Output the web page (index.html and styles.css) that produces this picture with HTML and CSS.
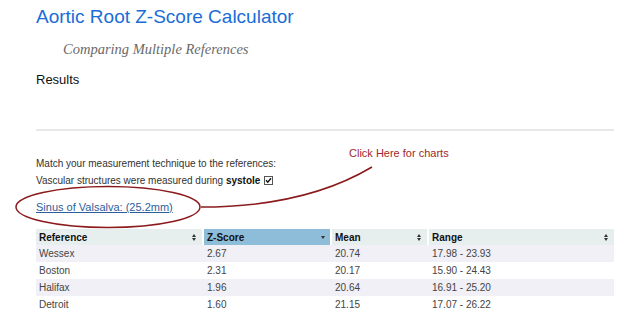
FILE: index.html
```html
<!DOCTYPE html>
<html lang="en">

<head>
    <meta charset="UTF-8">
    <meta name="viewport" content="width=device-width, initial-scale=1.0">
    <title>Aortic Root Z-Score Calculator</title>
    <link rel="stylesheet" href="styles.css">
</head>

<body>

    <div class="container">
        <header>
            <h1>Aortic Root Z-Score Calculator</h1>
            <h2>Comparing Multiple References</h2>
        </header>

        <h3 class="section-title">Results</h3>
        <div class="divider"></div>

        <!-- Measurement technique -->
        <p class="note">Match your measurement technique to the references:</p>
        <p class="note">Vascular structures were measured during <b>systole</b>
            <span class="check">
                <svg width="9" height="9" viewBox="0 0 9 9">
                    <rect x="0.5" y="0.5" width="8" height="8" fill="#fff" stroke="#555"/>
                    <path d="M2 4.2 L3.8 6.2 L7 2.2" fill="none" stroke="#111" stroke-width="1.4"/>
                </svg>
            </span>
        </p>

        <a class="site-link" href="#">Sinus of Valsalva: (25.2mm)</a>

        <!-- Results table -->
        <table class="results">
            <colgroup>
                <col style="width: 166px">
                <col style="width: 128px">
                <col style="width: 97px">
                <col style="width: 187px">
            </colgroup>
            <thead>
                <tr>
                    <th class="sortable">Reference</th>
                    <th class="sorted">Z-Score</th>
                    <th class="sortable">Mean</th>
                    <th class="sortable">Range</th>
                </tr>
            </thead>
            <tbody>
                <tr><td>Wessex</td><td>2.67</td><td>20.74</td><td>17.98 - 23.93</td></tr>
                <tr><td>Boston</td><td>2.31</td><td>20.17</td><td>15.90 - 24.43</td></tr>
                <tr><td>Halifax</td><td>1.96</td><td>20.64</td><td>16.91 - 25.20</td></tr>
                <tr><td>Detroit</td><td>1.60</td><td>21.15</td><td>17.07 - 26.22</td></tr>
            </tbody>
        </table>
    </div>

    <!-- Annotation drawn over the page -->
    <svg class="callout" width="640" height="335" viewBox="0 0 640 335">
        <ellipse cx="108" cy="207" rx="92" ry="20.5" fill="none" stroke="#8b1a1c" stroke-width="1.5"/>
        <path d="M201 207 Q 305 207 372 167" fill="none" stroke="#8b1a1c" stroke-width="1.5"/>
    </svg>
    <span class="callout-text">Click Here for charts</span>

</body>

</html>
```

FILE: styles.css
```css
/* General Page Styles */
body {
    font-family: 'Liberation Sans', Arial, sans-serif;
    margin: 0;
    padding: 0;
    background-color: #fff;
    color: #333;
    position: relative;
}

.container {
    width: 578px;
    margin-left: 36px;
}

h1 {
    font-size: 19px;
    line-height: 22px;
    font-weight: normal;
    color: #1a6dd6;
    margin: 6px 0 0 0;
}

h2 {
    font-family: 'Liberation Serif', 'Times New Roman', serif;
    font-style: italic;
    font-weight: normal;
    font-size: 14.5px;
    line-height: 18px;
    color: #6a6a6a;
    margin: 12px 0 0 27px;
}

.section-title {
    font-size: 13px;
    line-height: 16px;
    font-weight: normal;
    color: #111;
    margin: 14px 0 0 0;
}

.divider {
    height: 2px;
    background-color: #e8e8e8;
    margin-top: 41px;
}

.note {
    font-size: 10px;
    line-height: 17px;
    margin: 0;
    color: #333;
}

.note:first-of-type {
    margin-top: 24px;
}

.note b {
    color: #111;
}

.check {
    display: inline-block;
    vertical-align: -1px;
    margin-left: 1px;
}

.check svg {
    display: block;
}

.site-link {
    display: inline-block;
    font-size: 11px;
    line-height: 17px;
    color: #2c5e9c;
    margin-top: 10px;
}

/* Results table */
.results {
    margin-top: 13px;
    width: 578px;
    table-layout: fixed;
    border-collapse: separate;
    border-spacing: 0;
    font-size: 10px;
}

.results th {
    position: relative;
    height: 16px;
    padding: 0 3px;
    text-align: left;
    font-weight: bold;
    color: #111;
    background-color: #e6eeee;
}

.results th + th {
    border-left: 2px solid #fff;
}

.results td {
    height: 17px;
    padding: 0 3px;
    color: #444;
}

.results td + td {
    border-left: 2px solid transparent;
}

.results tbody tr:nth-child(odd) td {
    background-color: #f0f0f6;
}

/* Sort icons */
.results th.sortable::before,
.results th.sortable::after {
    content: "";
    position: absolute;
    right: 6px;
    border-left: 2.5px solid transparent;
    border-right: 2.5px solid transparent;
}

.results th.sortable::before {
    top: 5px;
    border-bottom: 3px solid #333;
}

.results th.sortable::after {
    top: 9px;
    border-top: 3px solid #333;
}

.results th.sorted {
    background-color: #8dbdd8;
}

.results th.sorted::after {
    content: "";
    position: absolute;
    right: 5px;
    top: 7px;
    border-left: 2.5px solid transparent;
    border-right: 2.5px solid transparent;
    border-top: 3px solid #333;
}

/* Annotation */
.callout {
    position: absolute;
    top: 0;
    left: 0;
    pointer-events: none;
}

.callout-text {
    position: absolute;
    left: 349px;
    top: 146px;
    font-size: 11px;
    line-height: 14px;
    color: #a0282b;
}
```
